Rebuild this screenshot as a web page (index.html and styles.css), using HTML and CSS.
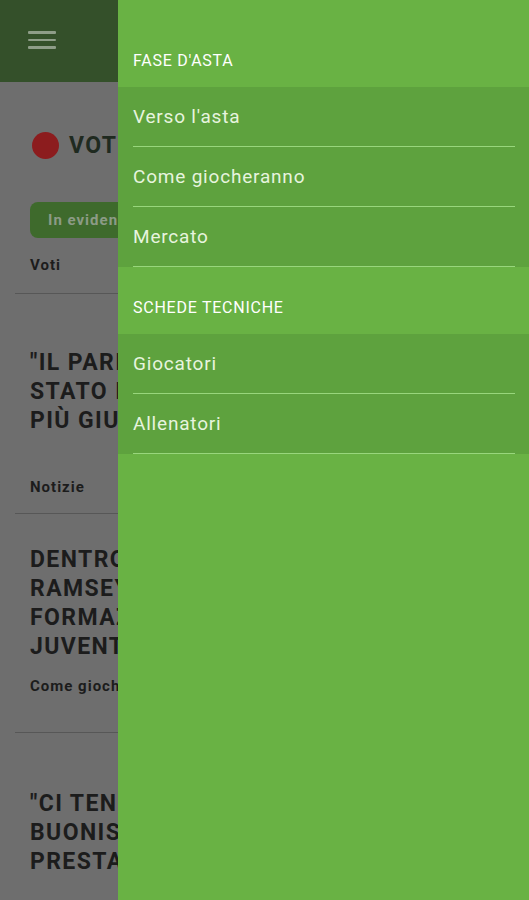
FILE: index.html
```html
<!DOCTYPE html>
<html lang="it">
<head>
  <meta charset="UTF-8">
  <title>Fantacalcio — menu</title>
  <link rel="stylesheet" href="styles.css">
</head>
<body>

<div class="screen">
  <!-- ========= APP BAR ========= -->
  <header class="appbar">
    <span class="burger"><i></i><i></i><i></i></span>
  </header>

  <!-- ========= FEED (dimmed, cut off by the drawer) ========= -->
  <main class="feed">
    <div class="section-title">
      <span class="dot"></span>
      <h1>VOTI</h1>
    </div>

    <div class="chips">
      <span class="chip">In evidenza</span>
    </div>
    <div class="label label--top">Voti</div>

    <article class="item">
      <h2>"IL PARI È<br>STATO IL RISULTATO<br>PIÙ GIUSTO"</h2>
      <div class="label">Notizie</div>
    </article>

    <article class="item item--long">
      <h2>DENTRO LA PARTITA:<br>RAMSEY TREQUARTISTA,<br>FORMAZIONE TIPO<br>JUVENTUS</h2>
      <div class="label">Come giocheranno</div>
    </article>

    <article class="item item--last">
      <h2>"CI TENEVO A FARE UNA<br>BUONISSIMA<br>PRESTAZIONE"</h2>
    </article>
  </main>

  <!-- ========= NAV DRAWER ========= -->
  <nav class="drawer">
    <div class="drawer-head">FASE D'ASTA</div>
    <ul class="drawer-group">
      <li><a href="#">Verso l'asta</a></li>
      <li><a href="#">Come giocheranno</a></li>
      <li><a href="#">Mercato</a></li>
    </ul>

    <div class="drawer-head">SCHEDE TECNICHE</div>
    <ul class="drawer-group">
      <li><a href="#">Giocatori</a></li>
      <li><a href="#">Allenatori</a></li>
    </ul>
  </nav>
</div>

</body>
</html>
```

FILE: styles.css
```css
/* ---------- Base ---------- */
html, body {
  margin: 0;
  padding: 0;
  background-color: #6e6e6e;
  font-family: Roboto, "Noto Sans", "Liberation Sans", sans-serif;
}

.screen { position: relative; width: 529px; height: 900px; overflow: hidden; }

/* ---------- App bar ---------- */
.appbar { height: 82px; background-color: #34502a; display: flex; align-items: center; padding-left: 28px; box-sizing: border-box; }
.burger { display: flex; flex-direction: column; gap: 5px; width: 28px; margin-top: -2px; }
.burger i { display: block; height: 2.5px; background-color: #8e9d88; border-radius: 1px; }

/* ---------- Feed (only the part left of the drawer shows) ---------- */
.feed { width: 103px; padding: 0 0 0 15px; overflow: hidden; }

.section-title { display: flex; align-items: center; gap: 10px; margin: 50px 0 0 17px; }
.dot { flex-shrink: 0; width: 27px; height: 27px; border-radius: 50%; background-color: #8c1c1e; }
.section-title h1 { margin: 0; font-size: 23px; font-weight: 700; color: #1f2a20; line-height: 27px; letter-spacing: 1.4px; white-space: nowrap; }

.chips { margin: 43px 0 0 15px; white-space: nowrap; }
.chip { display: inline-block; height: 36px; line-height: 36px; padding: 0 18px; border-radius: 8px; background-color: #3e6a2c; color: #8c9b86; font-size: 15px; font-weight: 700; letter-spacing: 1px; }

.label { font-size: 15px; font-weight: 700; color: #1c1c1c; line-height: 20px; padding-left: 15px; letter-spacing: 1px; white-space: nowrap; }
.label--top { margin-top: 17px; padding-bottom: 18px; border-bottom: 1px solid #575757; }

.item { border-bottom: 1px solid #575757; padding: 54px 0 16px; }
.item h2 { margin: 0 0 42px 15px; font-size: 23px; font-weight: 700; line-height: 29px; color: #1c1c1c; letter-spacing: 1.4px; white-space: nowrap; }
.item--long { padding: 31px 0 36px; }
.item--long h2 { margin-bottom: 15px; }
.item--last { border-bottom: 0; padding-top: 56px; }

/* ---------- Drawer ---------- */
.drawer { position: absolute; top: 0; left: 118px; right: 0; bottom: 0; background-color: #69b244; padding-top: 20px; }
.drawer-head { padding: 32px 15px 17px; font-size: 16px; line-height: 18px; color: #ffffff; letter-spacing: 0.75px; }
.drawer-group { list-style: none; margin: 0; padding: 0; background-color: #5ea23e; }
.drawer-group li { height: 60px; margin: 0 14px 0 15px; border-bottom: 1px solid #98d67c; box-sizing: border-box; }
.drawer-group a { display: block; line-height: 59px; font-size: 19px; color: #e7f4de; text-decoration: none; letter-spacing: 0.8px; }
```
